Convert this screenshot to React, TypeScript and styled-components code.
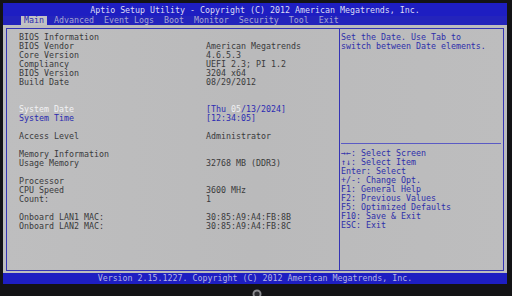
import React from "react";
import styled, { createGlobalStyle } from "styled-components";

const Global = createGlobalStyle`
  html, body { margin: 0; padding: 0; background: #121214; }
  body { width: 512px; height: 296px; overflow: hidden; }
  #root { width: 512px; height: 296px; }
`;

const Screen = styled.div`
  width: 512px;
  height: 296px;
  box-sizing: border-box;
  padding: 3px 5px 0 3px;
  background: #131315;
  font-family: "DejaVu Sans Mono", "Liberation Mono", monospace;
  font-size: 8.3px;
  display: flex;
  flex-direction: column;
`;

const Frame = styled.div`
  display: flex;
  flex-direction: column;
  background: #1e1ec2;
`;

const TitleBar = styled.div`
  height: 11px;
  padding-top: 2px;
  line-height: 11px;
  text-align: center;
  color: #dcdcf4;
  white-space: pre;
`;

const TabBar = styled.div`
  height: 9px;
  display: flex;
  gap: 4px;
  padding-left: 18px;
  background: #2424bc;
`;

const Tab = styled.div<{ $active?: boolean }>`
  line-height: 9px;
  padding: 0 3px;
  white-space: pre;
  color: ${(p) => (p.$active ? "#2a2aae" : "#a4a4d4")};
  background: ${(p) => (p.$active ? "#c2c2c4" : "transparent")};
`;

const Body = styled.div`
  background: linear-gradient(90deg, #bebebf 0%, #bababb 50%, #bdbdbe 100%);
  padding: 3px 3px 2px 3px;
`;

const BorderBox = styled.div`
  height: 241px;
  border: 1px solid #3434b4;
  display: grid;
  grid-template-columns: 332px 1fr;
`;

const LeftPanel = styled.div`
  padding: 4px 0 0 12px;
`;

const Row = styled.div`
  height: 9px;
  line-height: 9px;
  display: grid;
  grid-template-columns: 187px 1fr;
  white-space: pre;
  color: #38383a;
`;

const Label = styled.span<{ $tone?: string }>`
  color: ${(p) =>
    p.$tone === "selected" ? "#f2f2f4" : p.$tone === "blue" ? "#2a2ab0" : "#3a3a3c"};
`;

const Value = styled.span<{ $tone?: string }>`
  color: ${(p) => (p.$tone === "blue" ? "#2c2cb2" : "#3a3a3c")};
`;

const Hi = styled.span`
  color: #f0f0f2;
`;

const RightPanel = styled.div`
  border-left: 1px solid #3434b4;
  display: flex;
  flex-direction: column;
  padding: 0 2px 0 1px;
`;

const HelpTop = styled.div`
  height: 115px;
  box-sizing: border-box;
  padding-top: 4px;
  border-bottom: 1px solid #5a5ac4;
`;

const HelpBottom = styled.div`
  padding-top: 5px;
`;

const HelpLine = styled.div`
  height: 9px;
  line-height: 9px;
  white-space: pre;
  color: #2e2eaa;
`;

const VersionBar = styled.div`
  height: 11px;
  line-height: 11px;
  text-align: center;
  color: #b4b4e4;
  white-space: pre;
  background: #1e1ec2;
`;

const Bezel = styled.div`
  flex: 1;
  display: flex;
  justify-content: center;
  align-items: flex-end;
  padding-left: 4px;
`;

type RowData = { label?: string; value?: React.ReactNode; tone?: string; vtone?: string };

const rows: RowData[] = [
  { label: "BIOS Information" },
  { label: "BIOS Vendor", value: "American Megatrends" },
  { label: "Core Version", value: "4.6.5.3" },
  { label: "Compliancy", value: "UEFI 2.3; PI 1.2" },
  { label: "BIOS Version", value: "3204 x64" },
  { label: "Build Date", value: "08/29/2012" },
  {},
  {},
  {
    label: "System Date",
    tone: "selected",
    vtone: "blue",
    value: (
      <>
        [Thu <Hi>05</Hi>/13/2024]
      </>
    ),
  },
  { label: "System Time", tone: "blue", vtone: "blue", value: "[12:34:05]" },
  {},
  { label: "Access Level", value: "Administrator" },
  {},
  { label: "Memory Information" },
  { label: "Usage Memory", value: "32768 MB (DDR3)" },
  {},
  { label: "Processor" },
  { label: "CPU Speed", value: "3600 MHz" },
  { label: "Count:", value: "1" },
  {},
  { label: "Onboard LAN1 MAC:", value: "30:85:A9:A4:FB:8B" },
  { label: "Onboard LAN2 MAC:", value: "30:85:A9:A4:FB:8C" },
];

const tabs = ["Main", "Advanced", "Event Logs", "Boot", "Monitor", "Security", "Tool", "Exit"];

const keys = [
  "\u2192\u2190: Select Screen",
  "\u2191\u2193: Select Item",
  "Enter: Select",
  "+/-: Change Opt.",
  "F1: General Help",
  "F2: Previous Values",
  "F5: Optimized Defaults",
  "F10: Save & Exit",
  "ESC: Exit",
];

export default function App() {
  return (
    <>
      <Global />
      <Screen>
        <Frame>
          <TitleBar>Aptio Setup Utility - Copyright (C) 2012 American Megatrends, Inc.</TitleBar>
          <TabBar>
            {tabs.map((t, i) => (
              <Tab key={t} $active={i === 0}>
                {t}
              </Tab>
            ))}
          </TabBar>
          <Body>
            <BorderBox>
              <LeftPanel>
                {rows.map((r, i) => (
                  <Row key={i}>
                    <Label $tone={r.tone}>{r.label ?? ""}</Label>
                    <Value $tone={r.vtone}>{r.value ?? ""}</Value>
                  </Row>
                ))}
              </LeftPanel>
              <RightPanel>
                <HelpTop>
                  <HelpLine>Set the Date. Use Tab to</HelpLine>
                  <HelpLine>switch between Date elements.</HelpLine>
                </HelpTop>
                <HelpBottom>
                  {keys.map((k) => (
                    <HelpLine key={k}>{k}</HelpLine>
                  ))}
                </HelpBottom>
              </RightPanel>
            </BorderBox>
          </Body>
          <VersionBar>Version 2.15.1227. Copyright (C) 2012 American Megatrends, Inc.</VersionBar>
        </Frame>
        <Bezel>
          <svg width="10" height="8" viewBox="0 0 10 8">
            <circle cx="5" cy="6" r="4.5" fill="#8a8a8e" />
            <circle cx="5" cy="6" r="2.6" fill="#2a2a2e" />
          </svg>
        </Bezel>
      </Screen>
    </>
  );
}
